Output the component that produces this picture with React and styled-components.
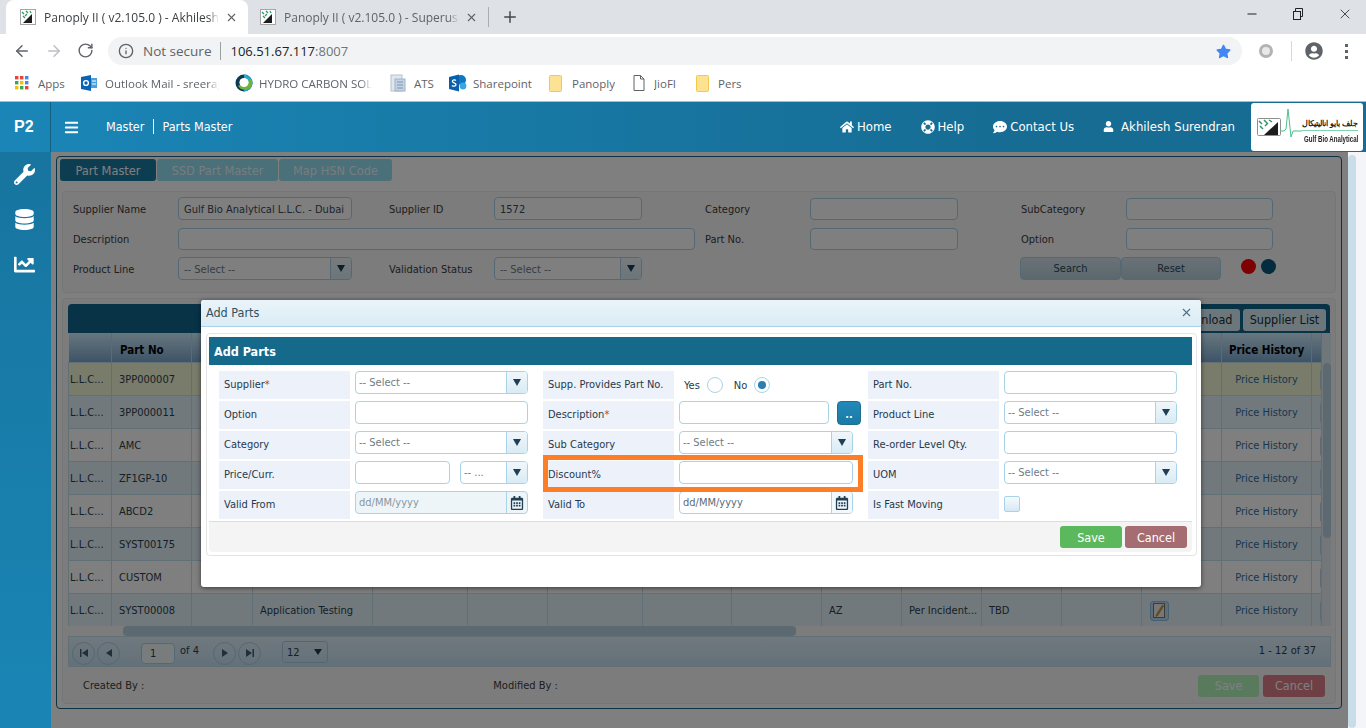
import React from "react";
import styled, { createGlobalStyle } from "styled-components";
import {
  FaBars,
  FaChartLine,
  FaCommentDots,
  FaDatabase,
  FaHome,
  FaLifeRing,
  FaRegCalendarAlt,
  FaStar,
  FaUser,
  FaUserCircle,
  FaWrench,
} from "react-icons/fa";
import { ArrowLeft, ArrowRight, RotateCw, Plus, X, Info, Minus } from "lucide-react";

const PAGE_FONT = `"DejaVu Sans Condensed", "DejaVu Sans", sans-serif`;

const GlobalStyle = createGlobalStyle`
  html, body { margin: 0; padding: 0; height: 100%; overflow: hidden; }
  * { box-sizing: border-box; }
  body { font-family: ${PAGE_FONT}; font-stretch: condensed; background: #fff; }
`;

/* browser chrome */
const Screen = styled.div`
  position: relative;
  width: 1366px;
  height: 728px;
  overflow: hidden;
  display: flex;
  flex-direction: column;
`;

const TabStrip = styled.div`
  height: 34px;
  background: #dee1e6;
  display: flex;
  align-items: flex-end;
  padding-left: 6px;
  font-family: "Open Sans", sans-serif;
  font-stretch: normal;
  font-size: 12px;
  color: #3c4043;
  flex: none;
`;

const BrowserTab = styled.div`
  width: ${(p) => p.$w}px;
  height: 34px;
  background: ${(p) => (p.$active ? "#fff" : "transparent")};
  border-radius: 8px 8px 0 0;
  display: flex;
  align-items: center;
  padding-left: ${(p) => (p.$active ? 14 : 12)}px;
  flex: none;
`;

const TabTitle = styled.span`
  margin-left: 8px;
  width: ${(p) => p.$w}px;
  white-space: nowrap;
  overflow: hidden;
  color: ${(p) => (p.$active ? "#3c4043" : "#5f6368")};
  mask-image: linear-gradient(to right, #000 94%, transparent);
`;

const TabClose = styled(X)`
  margin-left: 6px;
  color: #5f6368;
  flex: none;
`;

const TabDivider = styled.div`
  width: 1px;
  height: 20px;
  background: #a9acb0;
  margin: 0 0 7px 0;
`;

const NewTab = styled(Plus)`
  color: #45484d;
  margin: 0 0 8px 12px;
`;

const WindowButtons = styled.div`
  margin-left: auto;
  align-self: flex-start;
  height: 28px;
  display: flex;
  align-items: center;
  gap: 32px;
  padding-right: 13px;
  color: #222;
`;

const RestoreIcon = () => (
  <svg width="14" height="14" viewBox="0 0 14 14" fill="none" stroke="#222" strokeWidth="1">
    <rect x="2.5" y="4.5" width="7" height="8" />
    <path d="M4.5 4.5V1.5h7v8h-2" />
  </svg>
);

const Toolbar = styled.div`
  height: 34px;
  flex: none;
  display: flex;
  align-items: center;
  background: #fff;
  padding-left: 13px;
  color: #5f6368;
`;

const NavIcons = styled.div`
  width: 95px;
  display: flex;
  gap: 14px;
  flex: none;
`;

const Omnibox = styled.div`
  width: 1134px;
  height: 28px;
  border-radius: 14px;
  background: #f1f3f4;
  display: flex;
  align-items: center;
  padding: 0 10px;
  font-family: "Open Sans", sans-serif;
  font-stretch: normal;
  font-size: 13px;
  flex: none;
`;

const NotSecure = styled.span`
  margin-left: 9px;
  color: #5f6368;
  font-size: 13.5px;
  padding-right: 9px;
  border-right: 1px solid #9aa0a6;
  line-height: 18px;
`;

const Address = styled.span`
  margin-left: 9px;
  color: #202124;
  & > em { font-style: normal; color: #70757a; }
`;

const StarIcon = styled(FaStar)`
  margin-left: auto;
  margin-right: 1px;
  color: #4285f4;
`;

const ToolbarRight = styled.div`
  display: flex;
  align-items: center;
  margin-left: 17px;
`;

const ExtensionRing = styled.div`
  width: 14px;
  height: 14px;
  border-radius: 50%;
  border: 3px solid #b3b3b3;
  background: #e8e8e8;
`;

const ToolbarSep = styled.div`
  width: 1px;
  height: 20px;
  background: #d5d7da;
  margin: 0 13px 0 18px;
`;

const AvatarIcon = styled(FaUserCircle)`
  color: #5f6368;
`;

const MenuDots = styled.div`
  margin-left: 22px;
  width: 3px;
  height: 15px;
  background: radial-gradient(circle at 50% 1.5px, #5f6368 1.5px, transparent 2px) top / 3px 6px repeat-y;
`;

const Bookmarks = styled.div`
  flex: none;
  background: #fff;
  border-bottom: 1px solid #b9b9b9;
  height: 34px;
  display: flex;
  align-items: center;
  padding: 0 0 3px 15px;
  font-family: "Open Sans", sans-serif;
  font-stretch: normal;
  font-size: 11.5px;
  color: #5f6368;
`;

const Bookmark = styled.div`
  display: flex;
  align-items: center;
  width: ${(p) => p.$w}px;
  flex: none;
`;

const BookmarkLabel = styled.span`
  margin-left: ${(p) => p.$gap || 8}px;
  white-space: nowrap;
  overflow: hidden;
  ${(p) => (p.$fade ? `width: ${p.$fade}px; mask-image: linear-gradient(to right, #000 90%, transparent);` : "")}
`;

const Favicon = ({ size = 16 }) => (
  <svg width={size} height={size} viewBox="0 0 16 16" style={{ flex: "none" }}>
    <rect x="0.5" y="0.5" width="15" height="15" fill="#fff" stroke="#a5a5a5" />
    <path d="M3 14 12 5v9z" fill="#1d1d1d" />
    <path d="M2 3l2 2M6 2l2 2M10 2l1 2M3 7l2 2M7 5 5 7" stroke="#2c9a63" strokeWidth="1.3" />
  </svg>
);

const AppsIcon = () => (
  <svg width="14" height="14" viewBox="0 0 14 14">
    {["#ea4335", "#ea4335", "#4285f4", "#34a853", "#fbbc05", "#4285f4", "#fbbc05", "#34a853", "#ea4335"].map((c, i) => (
      <rect key={i} x={(i % 3) * 5} y={Math.floor(i / 3) * 5} width="3.4" height="3.4" fill={c} />
    ))}
  </svg>
);

const OutlookIcon = () => (
  <svg width="16" height="16" viewBox="0 0 16 16">
    <rect x="5" y="3" width="11" height="10" fill="#4aa1e0" />
    <path d="M0 2l10-2v16L0 14z" fill="#0a64b5" />
    <circle cx="5" cy="8" r="2.4" fill="none" stroke="#fff" strokeWidth="1.4" />
    <path d="M11 6h4M11 9h4" stroke="#fff" />
  </svg>
);

const RingIcon = () => (
  <svg width="18" height="18" viewBox="0 0 18 18">
    <circle cx="9" cy="9" r="8.5" fill="#0c3a52" />
    <path d="M9 .5A8.5 8.5 0 0 1 17.5 9 8.5 8.5 0 0 1 9 17.5z" fill="#27a7c9" />
    <path d="M3 12a8 8 0 0 0 12 2 7 7 0 0 0 1-9z" fill="#6cb33f" />
    <circle cx="9" cy="8.5" r="4.6" fill="#fff" />
  </svg>
);

const DocStackIcon = () => (
  <svg width="16" height="18" viewBox="0 0 16 18">
    <rect x="1" y="1" width="11" height="16" fill="#dfe6ee" stroke="#b6c1cc" />
    <rect x="5" y="5" width="10" height="12" fill="#c3d3e4" stroke="#9fb2c6" />
    <path d="M7 8h6M7 11h6M7 14h6" stroke="#7d94ab" />
  </svg>
);

const SharepointIcon = () => (
  <svg width="18" height="18" viewBox="0 0 18 18">
    <circle cx="12" cy="6" r="5" fill="#0a78c2" />
    <circle cx="14" cy="12" r="3.4" fill="#3aa6dd" />
    <path d="M0 3l10-2.5v17L0 15z" fill="#0b5ea8" />
    <path d="M7 6.5C6 5.5 3.5 5.5 3.4 7.3 3.3 9 7 8.7 7 10.6 7 12.4 4.3 12.5 3 11.4" fill="none" stroke="#fff" strokeWidth="1.3" />
  </svg>
);

const FolderIcon = () => (
  <svg width="13" height="17" viewBox="0 0 13 17">
    <rect x="0.5" y="0.5" width="12" height="16" rx="1" fill="#fde293" stroke="#f2c94c" />
  </svg>
);

const PageIcon = () => (
  <svg width="12" height="16" viewBox="0 0 12 16" fill="#fff" stroke="#5f6368">
    <path d="M1 .5h6.5L11 4v11.5H1z" />
    <path d="M7.5.5V4H11" fill="none" />
  </svg>
);

/* application bar */
const TopBar = styled.div`
  height: 50px;
  flex: none;
  display: flex;
  align-items: center;
  background: linear-gradient(to right, #1a86b7, #166c93 75%);
  color: #fff;
  font-size: 13px;
`;

const Brand = styled.div`
  width: 51px;
  height: 100%;
  display: flex;
  align-items: center;
  padding-left: 14px;
  border-right: 1px solid #14607f;
  font-family: "Liberation Sans", sans-serif;
  font-stretch: normal;
  font-weight: 700;
  font-size: 16px;
`;

const MenuButton = styled(FaBars)`
  margin-left: 13px;
  width: 15px;
  height: 15px;
`;

const Crumbs = styled.div`
  margin-left: 27px;
  margin-top: -1px;
  display: flex;
  font-size: 12.5px;
  gap: 9px;
  & > span + span { border-left: 1px solid #fff; padding-left: 8px; }
`;

const TopNav = styled.nav`
  margin-left: auto;
  display: flex;
  align-items: center;
`;

const NavLink = styled.div`
  display: flex;
  align-items: center;
  gap: 3px;
  margin-left: ${(p) => p.$gap}px;
  margin-top: -1px;
  font-size: 13px;
  white-space: nowrap;
`;

const UserName = styled(NavLink)`
  gap: 7px;
`;

const LogoBox = styled.div`
  width: 112px;
  height: 48px;
  margin: 0 3px 0 16px;
  background: #fff;
  border-radius: 3px;
  display: flex;
  align-items: center;
  padding: 0 5px;
  color: #222;
`;

const LogoText = styled.div`
  width: 56px;
  flex: none;
  margin-top: 10px;
  display: flex;
  flex-direction: column;
  align-items: flex-end;
  font-family: "Liberation Sans", sans-serif;
  font-stretch: normal;
  font-weight: 700;
  white-space: nowrap;
`;

const LogoArabic = styled.span`
  width: 100%;
  text-align: right;
  font-size: 7.5px;
  line-height: 10px;
  border-bottom: 1px solid #7fd3ae;
  padding-bottom: 1px;
  margin-bottom: 3px;
`;

const LogoName = styled.span`
  font-size: 8.5px;
  line-height: 11px;
  transform: scaleX(0.72);
  transform-origin: right center;
`;

const Logo = () => (
  <LogoBox>
    <svg width="46" height="40" viewBox="0 0 46 40" style={{ flex: "none" }}>
      <rect x="1.5" y="11.5" width="23" height="17" rx="1" fill="#fff" stroke="#8f8f8f" />
      <path d="M8 28 22 15v13z" fill="#1d1d1d" />
      <path d="M3 14l3 3M8 13l3 3M13 13l3 2M4 19l3 3M9 19l3-3" stroke="#2c9a63" strokeWidth="1.5" />
      <path d="M24 24h4l2-2 2-20 3 28 2-6h9" fill="none" stroke="#4dc08d" />
    </svg>
    <LogoText>
      <LogoArabic>جلف بايو اناليتيكال</LogoArabic>
      <LogoName>Gulf Bio Analytical</LogoName>
    </LogoText>
  </LogoBox>
);

/* page body */
const Body = styled.div`
  flex: 1;
  display: flex;
  min-height: 0;
`;

const Sidebar = styled.aside`
  width: 51px;
  flex: none;
  background: linear-gradient(to bottom, #17759f, #1a85b5);
  color: #fff;
  display: flex;
  flex-direction: column;
  align-items: center;
  padding: 12px 2px 0 0;
  gap: 24px;
  font-size: 21px;
`;

const Main = styled.main`
  flex: none;
  width: 1297px;
  padding: 4px 0 0 5px;
  background: #fff;
`;

const PageScroll = styled.div`
  flex: 1;
  background: #f3f5f8;
  position: relative;
  &::before {
    content: "";
    position: absolute;
    left: 0;
    top: 3px;
    bottom: 0;
    width: 8px;
    border-radius: 4px;
    background: #c9dde9;
  }
`;

const Frame = styled.div`
  width: 1286px;
  height: 553px;
  border: 1px solid #17648a;
  border-radius: 4px;
  padding: 2px 5px 0 3px;
`;

const Tabs = styled.div`
  display: flex;
  gap: 1px;
  height: 22px;
  margin-bottom: 10px;
`;

const Tab = styled.div`
  width: ${(p) => p.$w}px;
  border-radius: 3px;
  background: ${(p) => (p.$active ? "#1a7aa3" : "#95e0f5")};
  color: ${(p) => (p.$active ? "#fff" : "#f0f8fc")};
  font-size: 12.7px;
  display: flex;
  align-items: center;
  justify-content: center;
`;

const FilterPanel = styled.section`
  height: 102px;
  border: 1px solid #ececec;
  border-radius: 4px;
  background: #f8f8f8;
  margin: 0 0 5px 2px;
  width: 1274px;
  padding: 5px 0 0 10px;
  display: grid;
  grid-template-columns: repeat(3, 105px 211px) 105px 160px;
  grid-auto-rows: 23px;
  row-gap: 7px;
  font-size: 11px;
  color: #3a4750;
  align-items: center;
`;

const FieldLabel = styled.label`
  display: block;
  padding-top: 2px;
  color: #3c3c3c;
`;

const Field = styled.div`
  height: ${(p) => p.$h || 23}px;
  width: ${(p) => p.$w}px;
  border: 1px solid #a9d3e8;
  border-radius: 4px;
  background: #fff;
  display: flex;
  align-items: center;
  padding: ${(p) => (p.$text ? "2px 0 0 5px" : 0)};
  font-size: 11px;
  color: #3b4a55;
  grid-column: ${(p) => p.$span || "auto"};
  white-space: nowrap;
  overflow: hidden;
`;

const SelectText = styled.span`
  flex: 1;
  padding-left: ${(p) => (p.$raised ? 3 : 5)}px;
  color: #6e7c86;
  font-size: 11px;
  margin-top: ${(p) => (p.$raised ? 0 : 2)}px;
`;

const SelectArrow = styled.span`
  width: 21px;
  height: 100%;
  flex: none;
  border-left: 1px solid #a9d3e8;
  background: linear-gradient(#f0f7fb, #d9ebf5);
  display: flex;
  align-items: center;
  justify-content: center;
  &::after {
    content: "";
    border: 4.5px solid transparent;
    border-top: 7px solid #1e3f55;
    border-bottom: 0;
  }
`;

const Select = ({ w, value = "-- Select --", raised }) => (
  <Field $w={w}>
    <SelectText $raised={raised}>{value}</SelectText>
    <SelectArrow />
  </Field>
);

const FilterActions = styled.div`
  grid-column: 7 / span 2;
  display: flex;
  align-items: center;
  margin-left: -1px;
`;

const FilterButton = styled.button`
  width: ${(p) => p.$w}px;
  height: 23px;
  border: 1px solid #a9d3e8;
  border-radius: 4px;
  background: linear-gradient(#d4e4ee, #b8d0dc);
  font: inherit;
  color: #2d4a5c;
`;

const Dot = styled.span`
  width: 15px;
  height: 15px;
  border-radius: 50%;
  background: ${(p) => p.$c};
  margin: -5px 0 0 ${(p) => p.$gap}px;
`;

const GridPanel = styled.section`
  height: 406px;
  width: 1274px;
  margin-left: 2px;
  border: 1px solid #ececec;
  border-radius: 4px;
  background: #f8f8f8;
  padding: 5px 5px 0 5px;
  font-size: 11px;
`;

const GridBar = styled.div`
  height: 29px;
  border-radius: 4px 4px 0 0;
  background: #10678e;
  display: flex;
  align-items: center;
  justify-content: flex-end;
  padding: 2px 4px 0 0;
  gap: 3px;
`;

const BarButton = styled.div`
  height: 22px;
  width: ${(p) => p.$w}px;
  flex: none;
  border-radius: 3px;
  background: #d8eef8;
  color: #1a2f3c;
  font-size: 12.5px;
  display: flex;
  align-items: center;
  justify-content: center;
`;

const GridBody = styled.div`
  display: flex;
  height: 293px;
  width: 1263px;
  overflow: hidden;
`;

const Table = styled.table`
  table-layout: fixed;
  width: 1253px;
  height: 293px;
  flex: none;
  border-collapse: collapse;
`;

const Th = styled.th`
  height: 29px;
  background: linear-gradient(#cfeeff, #7ba7cd);
  border-right: 1px solid #b6d4e6;
  font-size: 11.5px;
  font-weight: 700;
  color: #000;
  padding: 5px 0 0 ${(p) => (p.$left ? p.$left : 0)}px;
  text-align: ${(p) => (p.$left ? "left" : "center")};
  overflow: hidden;
  white-space: nowrap;
`;

const Tr = styled.tr`
  background: ${(p) => (p.$selected ? "#f3f6d6" : p.$alt ? "#e4f2fa" : "#fff")};
`;

const Td = styled.td`
  height: 33px;
  padding: 2px 0 0 ${(p) => p.$pad ?? 7}px;
  border: 1px solid #c2e0ef;
  font-size: 11px;
  color: ${(p) => (p.$link ? "#2f6f9f" : "#2b3f4c")};
  text-align: ${(p) => (p.$link ? "center" : "left")};
  white-space: nowrap;
  overflow: hidden;
`;

const RowAction = styled.div`
  width: 10px;
  height: 22px;
  margin-left: 8px;
  border: 1px solid #b8d6e6;
  border-radius: 3px;
`;

const EditButton = styled.div`
  width: 19px;
  height: 20px;
  margin-left: 1px;
  border: 1px solid #8fbfdc;
  border-radius: 3px;
  background: #bcdcf0;
  display: flex;
  align-items: center;
  justify-content: center;
`;

const VScroll = styled.div`
  width: 10px;
  flex: none;
  background: linear-gradient(#e0eef6 30px, #e8eef2 30px);
  position: relative;
  &::after {
    content: "";
    position: absolute;
    left: 1px;
    right: 1px;
    top: 30px;
    height: 175px;
    border-radius: 4px;
    background: #bbd3e0;
  }
`;

const HScroll = styled.div`
  height: 10px;
  width: 1263px;
  background: #f8f8f8;
  border-radius: 5px;
  padding-left: 55px;
`;

const HThumb = styled.div`
  width: 673px;
  height: 100%;
  border-radius: 4px;
  background: #bbd3e0;
`;

const Pager = styled.div`
  height: 31px;
  width: 1263px;
  background: linear-gradient(#def1fb, #c9e2f3);
  border: 1px solid #c2e0ef;
  display: flex;
  align-items: center;
  font-size: 11px;
  color: #2b3f4c;
  padding-left: 1px;
`;

const PagerButton = styled.div`
  width: 23px;
  height: 23px;
  margin: 3px 0 0 ${(p) => p.$gap || 2}px;
  border: 1px solid #a9cfe3;
  border-radius: 50%;
  display: flex;
  align-items: center;
  justify-content: center;
  flex: none;
`;

const PageBox = styled.div`
  width: 34px;
  height: 21px;
  margin: 3px 0 0 21px;
  border: 1px solid #a9d3e8;
  border-radius: 4px;
  background: #f2f8fb;
  display: flex;
  align-items: center;
  padding-left: 8px;
`;

const PageOf = styled.span`
  margin: -3px 0 0 5px;
  width: 31px;
`;

const PageSize = styled.div`
  width: 46px;
  height: 22px;
  margin: 1px 0 0 21px;
  border: 1px solid #a9cfe3;
  border-radius: 3px;
  display: flex;
  align-items: center;
  justify-content: space-between;
  padding: 0 5px 0 4px;
  &::after {
    content: "";
    border: 4px solid transparent;
    border-top: 6px solid #1e3f55;
    border-bottom: 0;
  }
`;

const PageCount = styled.span`
  margin: -3px 0 0 auto;
  padding-right: 14px;
`;

const GridFooter = styled.div`
  display: flex;
  align-items: center;
  height: 37px;
  font-size: 11px;
  color: #3c3c3c;
  padding: 0 5px 0 15px;
`;

const Credit = styled.span`
  width: ${(p) => p.$w}px;
`;

const saveColor = (p) => (p.$muted ? "#b4f4bc" : "#5cb85c");
const cancelColor = (p) => (p.$muted ? "#dc808a" : "#a56d72");

const ColorButton = styled.button`
  height: 22px;
  width: ${(p) => p.$w || 62}px;
  margin-left: ${(p) => p.$gap || 0}px;
  border: 0;
  border-radius: 3px;
  background: ${(p) => (p.$kind === "save" ? saveColor(p) : cancelColor(p))};
  color: #fff;
  font: inherit;
  font-size: 12.5px;
`;

/* modal */
const Overlay = styled.div`
  position: absolute;
  left: 51px;
  top: 152px;
  right: 18px;
  bottom: 0;
  background: rgba(0, 0, 0, 0.5);
`;

const Dialog = styled.div`
  position: absolute;
  left: 201px;
  top: 300px;
  width: 1000px;
  height: 287px;
  background: #fff;
  border-radius: 3px;
  box-shadow: 0 1px 5px rgba(0, 0, 0, 0.55);
`;

const DialogTitle = styled.div`
  height: 27px;
  border-bottom: 1px solid #a9d3e8;
  border-radius: 3px 3px 0 0;
  background: linear-gradient(#e9f4f9, #dcecf5);
  display: flex;
  align-items: center;
  justify-content: space-between;
  padding: 0 8px 2px 5px;
  font-size: 12.5px;
  color: #35505f;
`;

const CloseIcon = styled(X)`
  color: #4d7186;
`;

const DialogCard = styled.div`
  margin: 6px 4px 0 5px;
  height: 223px;
  border: 1px solid #e4e4e4;
  border-radius: 4px;
  padding: 3px 4px 0 2px;
`;

const CardHeader = styled.div`
  height: 28px;
  background: #156a8c;
  color: #fff;
  font-weight: 700;
  font-size: 12.5px;
  display: flex;
  align-items: center;
  padding-left: 5px;
`;

const FormGrid = styled.div`
  position: relative;
  margin: 6px 0 0 10px;
  display: grid;
  grid-template-columns: 131px 193px 131px 194px 131px 1fr;
  grid-auto-rows: 28px;
  row-gap: 2px;
  height: 150px;
  font-size: 11px;
  color: #1f3a4c;
`;

const FormLabel = styled.div`
  background: #edf1f9;
  display: flex;
  align-items: center;
  padding: 0 0 2px 5px;
  white-space: nowrap;
  & > i { color: #c0392b; font-style: normal; }
`;

const FormCell = styled.div`
  padding-left: 5px;
  display: flex;
  align-items: flex-start;
  gap: ${(p) => p.$gap || 0}px;
`;

const RadioRow = styled.div`
  display: flex;
  align-items: center;
  height: 100%;
  margin-left: 5px;
  font-size: 11px;
`;

const Radio = styled.span`
  width: 16px;
  height: 16px;
  margin: 0 ${(p) => p.$after || 0}px 0 7px;
  border-radius: 50%;
  border: 1px solid #a9d3e8;
  background: #fff;
  display: flex;
  align-items: center;
  justify-content: center;
  &::after {
    content: "";
    width: 8px;
    height: 8px;
    border-radius: 50%;
    background: ${(p) => (p.$on ? "#2a7fb0" : "transparent")};
  }
`;

const LookupButton = styled.button`
  width: 24px;
  height: 24px;
  margin-left: 3px;
  border: 1px solid #1b6f93;
  border-radius: 4px;
  background: linear-gradient(#2389b8, #1b7aa5);
  color: #fff;
  font: inherit;
  font-size: 11px;
  font-weight: 700;
  padding-top: 3px;
`;

const DateText = styled.span`
  flex: 1;
  padding-left: 3px;
  font-size: 11px;
  color: ${(p) => (p.$off ? "#8a969e" : "#5c6a74")};
`;

const DateButton = styled.span`
  width: 21px;
  height: 100%;
  flex: none;
  border-left: 1px solid #a9d3e8;
  background: ${(p) => (p.$off ? "transparent" : "#f2f8fb")};
  color: #1e3f55;
  display: flex;
  align-items: center;
  justify-content: center;
  font-size: 14px;
`;

const DateField = styled(Field)`
  background: ${(p) => (p.$off ? "#eef5f8" : "#fff")};
`;

const CheckBox = styled.div`
  width: 16px;
  height: 16px;
  margin-top: 5px;
  border: 1px solid #a9d3e8;
  border-radius: 2px;
  background: linear-gradient(#f5fafd, #d6e8f4);
`;

const Highlight = styled.div`
  position: absolute;
  left: 324px;
  top: 84px;
  width: 320px;
  height: 37px;
  border: 5px solid #fd7e26;
  pointer-events: none;
`;

const CardFooter = styled.div`
  height: 31px;
  border-top: 1px solid #ddd;
  background: #f4f4f4;
  border-radius: 0 0 4px 4px;
  display: flex;
  justify-content: flex-end;
  align-items: flex-start;
  padding: 4px 5px 0 0;
  font-size: 12.5px;
`;

const PagerGlyph = ({ d }) => (
  <svg width="8" height="8" viewBox="0 0 8 8" fill="#3f6075">
    <path d={d} />
  </svg>
);

const PencilIcon = () => (
  <svg width="13" height="15" viewBox="0 0 13 15">
    <rect x="0.5" y="0.5" width="11" height="14" fill="#eee" stroke="#777" />
    <path d="M9.5 2 3.5 11.5l-.5 2 1.7-1.1L10.7 3z" fill="#e0a526" stroke="#8a6410" strokeWidth=".5" />
  </svg>
);

const COLS = [43, 80, 61, 120, 95, 80, 95, 89, 90, 80, 80, 80, 80, 80, 90, 10];

const ROWS = [
  { part: "3PP000007", selected: true },
  { part: "3PP000011", alt: true },
  { part: "AMC" },
  { part: "ZF1GP-10", alt: true },
  { part: "ABCD2" },
  { part: "SYST00175", alt: true },
  { part: "CUSTOM" },
  { part: "SYST00008", alt: true, desc: "Application Testing", make: "AZ", type: "Per Incident...", uom: "TBD", edit: true },
];

const HEADERS = { 1: "Part No", 14: "Price History", 15: "A" };
const HEADER_PAD = { 1: 8, 15: 9 };

const App = () => {
  return (
    <Screen>
      <GlobalStyle />
      <TabStrip>
        <BrowserTab $active $w={242}>
          <Favicon />
          <TabTitle $active $w={175}>Panoply II ( v2.105.0 ) - Akhilesh Surendran</TabTitle>
          <TabClose size={13} />
        </BrowserTab>
        <BrowserTab $w={240}>
          <Favicon />
          <TabTitle $w={175}>Panoply II ( v2.105.0 ) - Superuser</TabTitle>
          <TabClose size={13} />
        </BrowserTab>
        <TabDivider />
        <NewTab size={18} />
        <WindowButtons>
          <Minus size={14} />
          <RestoreIcon />
          <X size={16} strokeWidth={1.2} />
        </WindowButtons>
      </TabStrip>

      <Toolbar>
        <NavIcons>
          <ArrowLeft size={18} />
          <ArrowRight size={18} color="#bcbfc3" />
          <RotateCw size={17} />
        </NavIcons>
        <Omnibox>
          <Info size={16} />
          <NotSecure>Not secure</NotSecure>
          <Address>
            106.51.67.117<em>:8007</em>
          </Address>
          <StarIcon size={15} />
        </Omnibox>
        <ToolbarRight>
          <ExtensionRing />
          <ToolbarSep />
          <AvatarIcon size={18} />
          <MenuDots />
        </ToolbarRight>
      </Toolbar>

      <Bookmarks>
        <Bookmark $w={66}>
          <AppsIcon />
          <BookmarkLabel $gap={9}>Apps</BookmarkLabel>
        </Bookmark>
        <Bookmark $w={154}>
          <OutlookIcon />
          <BookmarkLabel $fade={114}>Outlook Mail - sreerag</BookmarkLabel>
        </Bookmark>
        <Bookmark $w={155}>
          <RingIcon />
          <BookmarkLabel $gap={6} $fade={113}>HYDRO CARBON SOLUTIONS</BookmarkLabel>
        </Bookmark>
        <Bookmark $w={59}>
          <DocStackIcon />
          <BookmarkLabel>ATS</BookmarkLabel>
        </Bookmark>
        <Bookmark $w={100}>
          <SharepointIcon />
          <BookmarkLabel $gap={6}>Sharepoint</BookmarkLabel>
        </Bookmark>
        <Bookmark $w={84}>
          <FolderIcon />
          <BookmarkLabel $gap={10}>Panoply</BookmarkLabel>
        </Bookmark>
        <Bookmark $w={63}>
          <PageIcon />
          <BookmarkLabel $gap={9}>JioFI</BookmarkLabel>
        </Bookmark>
        <Bookmark $w={60}>
          <FolderIcon />
          <BookmarkLabel $gap={9}>Pers</BookmarkLabel>
        </Bookmark>
      </Bookmarks>

      <TopBar>
        <Brand>P2</Brand>
        <MenuButton />
        <Crumbs>
          <span>Master</span>
          <span>Parts Master</span>
        </Crumbs>
        <TopNav>
          <NavLink $gap={0}>
            <FaHome size={14} />
            Home
          </NavLink>
          <NavLink $gap={29}>
            <FaLifeRing size={14} />
            Help
          </NavLink>
          <NavLink $gap={29}>
            <FaCommentDots size={14} />
            Contact Us
          </NavLink>
          <UserName $gap={29}>
            <FaUser size={11} />
            Akhilesh Surendran
          </UserName>
          <Logo />
        </TopNav>
      </TopBar>

      <Body>
        <Sidebar>
          <FaWrench />
          <FaDatabase />
          <FaChartLine />
        </Sidebar>
        <Main>
          <Frame>
            <Tabs>
              <Tab $active $w={96}>Part Master</Tab>
              <Tab $w={121}>SSD Part Master</Tab>
              <Tab $w={113}>Map HSN Code</Tab>
            </Tabs>
            <FilterPanel>
              <FieldLabel>Supplier Name</FieldLabel>
              <Field $w={174} $text>Gulf Bio Analytical L.L.C. - Dubai</Field>
              <FieldLabel>Supplier ID</FieldLabel>
              <Field $w={148} $text>1572</Field>
              <FieldLabel>Category</FieldLabel>
              <Field $w={148} $h={22} />
              <FieldLabel>SubCategory</FieldLabel>
              <Field $w={147} $h={22} />

              <FieldLabel>Description</FieldLabel>
              <Field $w={517} $h={22} $span="2 / span 3" />
              <FieldLabel>Part No.</FieldLabel>
              <Field $w={148} $h={22} />
              <FieldLabel>Option</FieldLabel>
              <Field $w={147} $h={22} />

              <FieldLabel>Product Line</FieldLabel>
              <Select w={174} />
              <FieldLabel>Validation Status</FieldLabel>
              <Select w={148} />
              <FilterActions>
                <FilterButton $w={101}>Search</FilterButton>
                <FilterButton $w={100}>Reset</FilterButton>
                <Dot $c="#ff0000" $gap={20} />
                <Dot $c="#0a567e" $gap={5} />
              </FilterActions>
            </FilterPanel>

            <GridPanel>
              <GridBar>
                <BarButton $w={71}>Download</BarButton>
                <BarButton $w={83}>Supplier List</BarButton>
              </GridBar>
              <GridBody>
                <Table>
                  <colgroup>
                    {COLS.map((w, i) => (
                      <col key={i} style={{ width: w }} />
                    ))}
                  </colgroup>
                  <thead>
                    <tr>
                      {COLS.map((_, i) => (
                        <Th key={i} $left={HEADER_PAD[i]}>
                          {HEADERS[i]}
                        </Th>
                      ))}
                    </tr>
                  </thead>
                  <tbody>
                    {ROWS.map((r) => (
                      <Tr key={r.part} $selected={r.selected} $alt={r.alt}>
                        <Td $pad={1}>L.L.C...</Td>
                        <Td>{r.part}</Td>
                        <Td />
                        <Td>{r.desc}</Td>
                        <Td />
                        <Td />
                        <Td />
                        <Td />
                        <Td />
                        <Td>{r.make}</Td>
                        <Td>{r.type}</Td>
                        <Td>{r.uom}</Td>
                        <Td />
                        <Td>
                          {r.edit && (
                            <EditButton>
                              <PencilIcon />
                            </EditButton>
                          )}
                        </Td>
                        <Td $link $pad={0}>Price History</Td>
                        <Td $pad={0}>
                          <RowAction />
                        </Td>
                      </Tr>
                    ))}
                  </tbody>
                </Table>
                <VScroll />
              </GridBody>
              <HScroll>
                <HThumb />
              </HScroll>
              <Pager>
                <PagerButton>
                  <PagerGlyph d="M0 0h1.5v8H0zM8 0v8L2 4z" />
                </PagerButton>
                <PagerButton>
                  <PagerGlyph d="M7 0v8L1 4z" />
                </PagerButton>
                <PageBox>1</PageBox>
                <PageOf>of 4</PageOf>
                <PagerButton>
                  <PagerGlyph d="M1 0v8l6-4z" />
                </PagerButton>
                <PagerButton>
                  <PagerGlyph d="M0 0v8l6-4zM6.5 0H8v8H6.5z" />
                </PagerButton>
                <PageSize>12</PageSize>
                <PageCount>1 - 12 of 37</PageCount>
              </Pager>
              <GridFooter>
                <Credit $w={411}>Created By :</Credit>
                <Credit $w={706}>Modified By :</Credit>
                <ColorButton $kind="save" $muted $w={61}>Save</ColorButton>
                <ColorButton $kind="cancel" $muted $gap={4}>Cancel</ColorButton>
              </GridFooter>
            </GridPanel>
          </Frame>
        </Main>
        <PageScroll />
      </Body>

      <Overlay />

      <Dialog>
        <DialogTitle>
          Add Parts
          <CloseIcon size={13} strokeWidth={2} />
        </DialogTitle>
        <DialogCard>
          <CardHeader>Add Parts</CardHeader>
          <FormGrid>
            <FormLabel>Supplier<i>*</i></FormLabel>
            <FormCell><Select w={173} raised /></FormCell>
            <FormLabel>Supp. Provides Part No.</FormLabel>
            <FormCell>
              <RadioRow>
                Yes<Radio $after={11} />No<Radio $on />
              </RadioRow>
            </FormCell>
            <FormLabel>Part No.</FormLabel>
            <FormCell><Field $w={173} /></FormCell>

            <FormLabel>Option</FormLabel>
            <FormCell><Field $w={173} /></FormCell>
            <FormLabel>Description<i>*</i></FormLabel>
            <FormCell $gap={5}>
              <Field $w={150} />
              <LookupButton>..</LookupButton>
            </FormCell>
            <FormLabel>Product Line</FormLabel>
            <FormCell><Select w={173} raised /></FormCell>

            <FormLabel>Category</FormLabel>
            <FormCell><Select w={173} raised /></FormCell>
            <FormLabel>Sub Category</FormLabel>
            <FormCell><Select w={174} raised /></FormCell>
            <FormLabel>Re-order Level Qty.</FormLabel>
            <FormCell><Field $w={173} /></FormCell>

            <FormLabel>Price/Curr.</FormLabel>
            <FormCell $gap={10}>
              <Field $w={95} />
              <Select w={68} value="-- ..." raised />
            </FormCell>
            <FormLabel>Discount%</FormLabel>
            <FormCell><Field $w={174} /></FormCell>
            <FormLabel>UOM</FormLabel>
            <FormCell><Select w={173} raised /></FormCell>

            <FormLabel>Valid From</FormLabel>
            <FormCell>
              <DateField $w={173} $off>
                <DateText $off>dd/MM/yyyy</DateText>
                <DateButton $off><FaRegCalendarAlt /></DateButton>
              </DateField>
            </FormCell>
            <FormLabel>Valid To</FormLabel>
            <FormCell>
              <DateField $w={174}>
                <DateText>dd/MM/yyyy</DateText>
                <DateButton><FaRegCalendarAlt /></DateButton>
              </DateField>
            </FormCell>
            <FormLabel>Is Fast Moving</FormLabel>
            <FormCell><CheckBox /></FormCell>

            <Highlight />
          </FormGrid>
          <CardFooter>
            <ColorButton $kind="save">Save</ColorButton>
            <ColorButton $kind="cancel" $gap={3}>Cancel</ColorButton>
          </CardFooter>
        </DialogCard>
      </Dialog>
    </Screen>
  );
};

export default App;
